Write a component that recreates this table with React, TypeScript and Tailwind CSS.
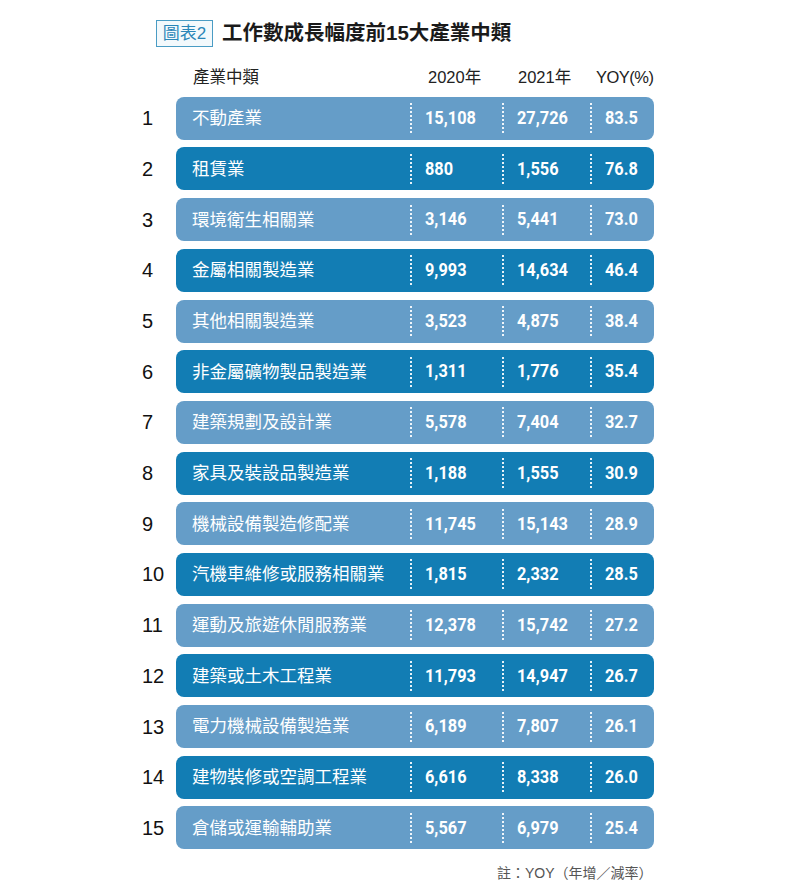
import React from 'react';

type Row = { name: string; y2020: string; y2021: string; yoy: string };

const rows: Row[] = [
  { name: '不動產業', y2020: '15,108', y2021: '27,726', yoy: '83.5' },
  { name: '租賃業', y2020: '880', y2021: '1,556', yoy: '76.8' },
  { name: '環境衛生相關業', y2020: '3,146', y2021: '5,441', yoy: '73.0' },
  { name: '金屬相關製造業', y2020: '9,993', y2021: '14,634', yoy: '46.4' },
  { name: '其他相關製造業', y2020: '3,523', y2021: '4,875', yoy: '38.4' },
  { name: '非金屬礦物製品製造業', y2020: '1,311', y2021: '1,776', yoy: '35.4' },
  { name: '建築規劃及設計業', y2020: '5,578', y2021: '7,404', yoy: '32.7' },
  { name: '家具及裝設品製造業', y2020: '1,188', y2021: '1,555', yoy: '30.9' },
  { name: '機械設備製造修配業', y2020: '11,745', y2021: '15,143', yoy: '28.9' },
  { name: '汽機車維修或服務相關業', y2020: '1,815', y2021: '2,332', yoy: '28.5' },
  { name: '運動及旅遊休閒服務業', y2020: '12,378', y2021: '15,742', yoy: '27.2' },
  { name: '建築或土木工程業', y2020: '11,793', y2021: '14,947', yoy: '26.7' },
  { name: '電力機械設備製造業', y2020: '6,189', y2021: '7,807', yoy: '26.1' },
  { name: '建物裝修或空調工程業', y2020: '6,616', y2021: '8,338', yoy: '26.0' },
  { name: '倉儲或運輸輔助業', y2020: '5,567', y2021: '6,979', yoy: '25.4' },
];

const cjk = { fontFamily: '"Liberation Sans", "Noto Sans CJK TC", sans-serif' };
const num = { fontFamily: 'Roboto, "Liberation Sans", sans-serif' };

function Cell({ value, width }: { value: string; width: string }) {
  return (
    <div className={`flex items-center ${width}`}>
      <span className="h-[30px] border-l-2 border-dotted border-white/90" />
      <span
        className="ml-[13px] inline-block origin-left scale-x-[0.86] text-[19px] font-bold text-white"
        style={num}
      >
        {value}
      </span>
    </div>
  );
}

export default function App() {
  return (
    <div className="w-[810px] h-[889px] bg-white" style={cjk}>
      <div className="flex items-center pl-[156px] pt-[18px]">
        <div className="flex h-[27px] w-[57px] items-center justify-center border border-[#4a9cc4] bg-[#f3f9fc] text-[17px] text-[#2a86b8]">
          圖表2
        </div>
        <h1 className="ml-[9px] text-[20.5px] font-bold text-[#1a1a1a]">工作數成長幅度前15大產業中類</h1>
      </div>

      <div className="mt-[15px] flex h-[28px] items-center text-[16.5px] text-[#222]">
        <span className="w-[428px] pl-[193px]">產業中類</span>
        <span className="w-[90px]">2020年</span>
        <span className="w-[78px]">2021年</span>
        <span className="tracking-[-0.5px]">YOY(%)</span>
      </div>

      <div className="mt-[5px] flex flex-col gap-[7.7px]">
        {rows.map((r, i) => (
          <div key={r.name} className="flex items-center">
            <span className="w-[176px] pl-[142px] text-[20px] text-[#111]">{i + 1}</span>
            <div
              className={`flex h-[43px] w-[478px] items-center rounded-[8px] ${
                i % 2 === 0 ? 'bg-[#659dc8]' : 'bg-[#127db4]'
              }`}
            >
              <span className="w-[234px] pl-[16px] text-[17.5px] text-white">{r.name}</span>
              <Cell value={r.y2020} width="w-[92px]" />
              <Cell value={r.y2021} width="w-[88px]" />
              <Cell value={r.yoy} width="w-[64px]" />
            </div>
          </div>
        ))}
      </div>

      <div className="mt-[14px] pl-[497px] text-[14px] text-[#555]">註：YOY（年增／減率）</div>
    </div>
  );
}
